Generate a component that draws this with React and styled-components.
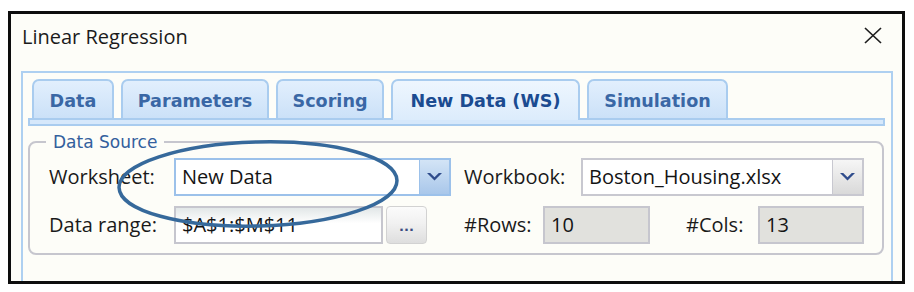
import styled, { createGlobalStyle } from "styled-components"

const GlobalStyle = createGlobalStyle`
  body {
    margin: 0;
    background: #ffffff;
  }
`

const tabs = [
  { label: 'Data', width: 82 },
  { label: 'Parameters', width: 148 },
  { label: 'Scoring', width: 108 },
  { label: 'New Data (WS)', width: 189, active: true },
  { label: 'Simulation', width: 141 },
]

const Chevron = () => (
  <svg width="15" height="8" viewBox="0 0 15 8">
    <polygon points="0,0 3.2,0 7.5,4.2 11.8,0 15,0 7.5,7.5" fill="#2f4c8c" />
  </svg>
)

const App = () => {
  return (
    <>
      <GlobalStyle />
      <Dialog>
        <TitleBar>
          <Title>Linear Regression</Title>
          <CloseButton aria-label="Close">
            <svg width="18" height="17" viewBox="0 0 18 17">
              <path d="M1 1 L17 16 M17 1 L1 16" stroke="#1e1e1e" strokeWidth="1.7" fill="none" />
            </svg>
          </CloseButton>
        </TitleBar>

        <TabPanel>
          <TabStrip>
            <TabRow>
              {tabs.map(t => (
                <Tab key={t.label} $width={t.width} $active={t.active}>{t.label}</Tab>
              ))}
            </TabRow>
            <TabBand />
          </TabStrip>

          <Group>
            <Legend>Data Source</Legend>
            <GroupBody>
              <Row>
                <Label $width={125}>Worksheet:</Label>
                <Select $width={277} $focused>
                  <Value>New Data</Value>
                  <DropButton $focused><Chevron /></DropButton>
                </Select>
                <Label $width={117} $lead={13}>Workbook:</Label>
                <Select $width={283}>
                  <Value>Boston_Housing.xlsx</Value>
                  <DropButton><Chevron /></DropButton>
                </Select>
              </Row>
              <Row>
                <Label $width={125}>Data range:</Label>
                <Field $width={209} $range>$A$1:$M$11</Field>
                <BrowseButton>...</BrowseButton>
                <Label $width={79} $lead={37}>#Rows:</Label>
                <Field $width={107}>10</Field>
                <Label $width={72} $lead={36}>#Cols:</Label>
                <Field $width={106}>13</Field>
              </Row>
            </GroupBody>
          </Group>
        </TabPanel>

        <Highlight width="290" height="96" viewBox="0 0 290 96">
          <ellipse cx="145" cy="48" rx="139" ry="42" transform="rotate(-1.5 145 48)"
            fill="none" stroke="#36699b" strokeWidth="3.5" />
        </Highlight>
      </Dialog>
    </>
  )
}

export default App

const Dialog = styled.div`
  position: relative;
  box-sizing: border-box;
  width: 897px;
  height: 273px;
  margin: 11px 0 0 8px;
  border: 3px solid #0d0d0d;
  background: #fdfdf8;
  overflow: hidden;
  display: flex;
  flex-direction: column;
`

const TitleBar = styled.div`
  box-sizing: border-box;
  height: 57px;
  flex-shrink: 0;
  display: flex;
  justify-content: space-between;
  align-items: flex-start;
  padding: 9px 20px 0 11px;
`

const Title = styled.div`
  font-family: "Open Sans", sans-serif;
  font-size: 20px;
  line-height: 28px;
  color: #1b1b1b;
`

const CloseButton = styled.div`
  margin-top: 4px;
  width: 18px;
  height: 17px;
  display: flex;
`

const TabPanel = styled.div`
  flex: 1;
  margin: 0 9px 0 10px;
  padding-top: 6px;
  border: 2px solid #aed0f1;
  border-bottom: none;
`

const TabStrip = styled.div`
  margin: 0 6px 0 5px;
`

const TabRow = styled.div`
  display: flex;
  align-items: flex-end;
  gap: 7px;
  padding-left: 4px;
  height: 39px;
`

const Tab = styled.div`
  position: relative;
  z-index: 1;
  box-sizing: border-box;
  width: ${p => p.$width}px;
  height: ${p => (p.$active ? 41 : 39)}px;
  margin-bottom: ${p => (p.$active ? -2 : 0)}px;
  padding-top: 10px;
  border: 2px solid #a9ccef;
  border-bottom: none;
  border-radius: 7px 7px 0 0;
  background: ${p => (p.$active
    ? 'linear-gradient(#eef6fe, #dcecfc)'
    : 'linear-gradient(#e2effd, #cbe1f8)')};
  font-family: "DejaVu Sans", Verdana, sans-serif;
  font-weight: bold;
  font-size: 17.6px;
  line-height: 20px;
  text-align: center;
  white-space: nowrap;
  color: ${p => (p.$active ? '#1b4b91' : '#3a67a5')};
`

const TabBand = styled.div`
  box-sizing: border-box;
  height: 8px;
  border: 2px solid #a9ccef;
  background: #d6e8fb;
`

const Group = styled.fieldset`
  margin: 6px 7px 0 5px;
  padding: 0;
  border: 2px solid #c6c6ce;
  border-radius: 8px;
`

const Legend = styled.legend`
  margin-left: 16px;
  padding: 0 7px;
  font-family: "DejaVu Sans", Verdana, sans-serif;
  font-size: 17px;
  line-height: 20px;
  color: #33609d;
`

const GroupBody = styled.div`
  display: flex;
  flex-direction: column;
  gap: 10px;
  padding: 6px 18px 9px 19px;
`

const Row = styled.div`
  display: flex;
  align-items: center;
  height: 38px;
`

const Label = styled.div`
  flex-shrink: 0;
  width: ${p => p.$width}px;
  margin-left: ${p => p.$lead || 0}px;
  font-family: "Open Sans", sans-serif;
  font-size: 20px;
  line-height: 28px;
  color: #1a1a1a;
`

const Select = styled.div`
  box-sizing: border-box;
  width: ${p => p.$width}px;
  height: 38px;
  display: flex;
  border: 2px solid ${p => (p.$focused ? '#9cc1ea' : '#c8c8d0')};
  background: #ffffff;
`

const Value = styled.div`
  flex: 1;
  padding-left: 6px;
  font-family: "Open Sans", sans-serif;
  font-size: 20px;
  line-height: 34px;
  color: #141414;
  white-space: nowrap;
  overflow: hidden;
`

const DropButton = styled.div`
  width: 29px;
  display: flex;
  align-items: center;
  justify-content: center;
  border-left: 1px solid ${p => (p.$focused ? '#9cc1ea' : '#c8c8d0')};
  background: ${p => (p.$focused
    ? 'linear-gradient(#d3e4f6, #a9c7ea)'
    : 'linear-gradient(#f6f6f6, #d9d9d9)')};
`

const Field = styled.div`
  box-sizing: border-box;
  flex-shrink: 0;
  width: ${p => p.$width}px;
  height: 38px;
  padding-left: 6px;
  border: 2px solid #c6c6ce;
  background: ${p => (p.$range
    ? 'linear-gradient(#e2e7e8, #ffffff 45%)'
    : '#e1e1dd')};
  font-family: "Open Sans", sans-serif;
  font-size: 20px;
  line-height: 34px;
  color: #141414;
`

const BrowseButton = styled.div`
  box-sizing: border-box;
  width: 41px;
  height: 38px;
  margin-left: 3px;
  border: 1px solid #d2d2d2;
  border-radius: 4px;
  background: linear-gradient(#fbfbfb, #f1f1f1 45%, #dedede);
  font-family: "DejaVu Sans", sans-serif;
  font-size: 13px;
  font-weight: bold;
  line-height: 40px;
  text-align: center;
  color: #3a4a80;
`

const Highlight = styled.svg`
  position: absolute;
  left: 102px;
  top: 122px;
  pointer-events: none;
`
